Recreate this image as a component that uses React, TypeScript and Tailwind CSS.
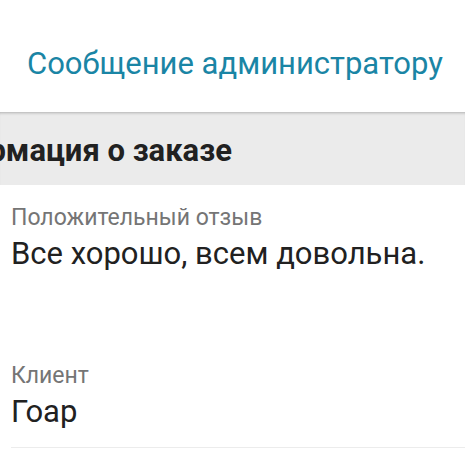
export default function App() {
  return (
    <div
      className="w-[465px] h-[465px] overflow-hidden bg-white"
      style={{ fontFamily: "Roboto, 'Noto Sans', sans-serif" }}
    >
      <div className="h-[112px] pt-[44px] pl-[27px]">
        <div className="text-[31px] leading-[40px] text-[#1a85a5] whitespace-nowrap">
          Сообщение администратору
        </div>
      </div>

      <div className="h-[73px] bg-[#ebebeb] shadow-[inset_0_3px_3px_-2px_rgba(0,0,0,0.25)] pt-[19px] overflow-hidden">
        <div className="ml-[-91px] text-[31px] leading-[40px] font-bold text-[#212121] whitespace-nowrap">
          Информация о заказе
        </div>
      </div>

      <div className="pl-[11px]">
        <div className="pt-[19px]">
          <div className="text-[23px] leading-[28px] text-[#757575]">Положительный отзыв</div>
          <div className="text-[31px] leading-[36px] text-[#212121] mt-[4px] whitespace-nowrap">
            Все хорошо, всем довольна.
          </div>
        </div>
        <div className="pt-[90px]">
          <div className="text-[23px] leading-[28px] text-[#757575]">Клиент</div>
          <div className="text-[31px] leading-[36px] text-[#212121] mt-[4px]">Гоар</div>
        </div>
        <div className="mt-[17px] border-b border-[#ececec]" />
      </div>
    </div>
  );
}
